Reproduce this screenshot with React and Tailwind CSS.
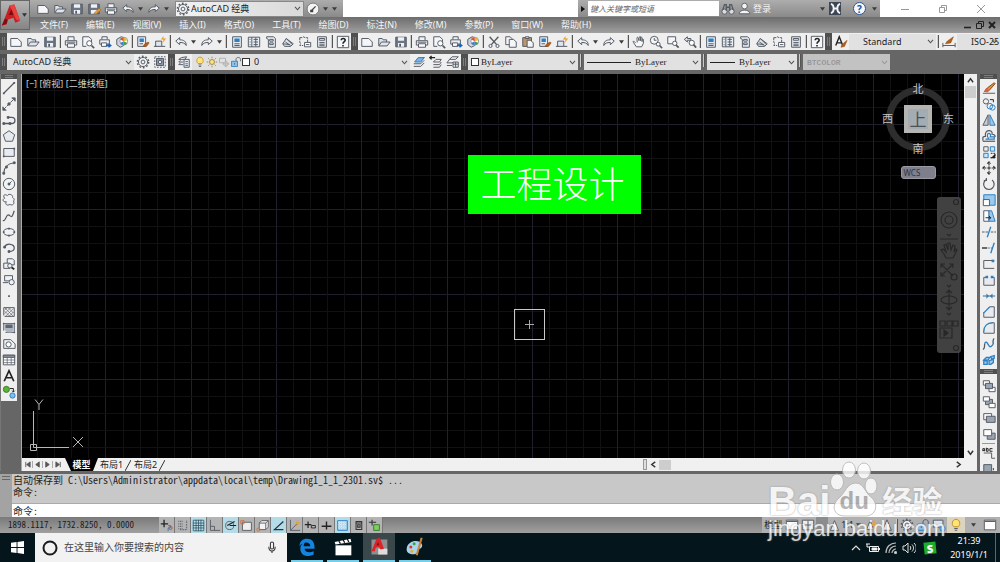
import { Fragment } from 'react';

const ink = '#545a63';
const blue = '#2d7fc1';
const soft = '#dfe5ec';

// All toolbar glyphs share a 16x16 box
const ICONS = {
    new: <path d="M2 13V4h8l4 4v5z" fill="#f4f6f9" />,
    open: <><path d="M2 12V4h4l1 1.500h4V8" fill={soft} /><path d="M2 12.500 5 8h10l-3.500 4.500z" fill={soft} /></>,
    save: <><path d="M2 2.500h12v11H2z" fill="#6b7684" /><path d="M4.500 2.500h7v4h-7zM4.500 9h7v4.500h-7z" fill="#eef1f5" stroke="none" /><path d="M6 10h2v3.500H6z" fill={ink} stroke="none" /></>,
    saveas: <><path d="M2 2.500h12v11H2z" fill="#6b7684" /><path d="M4.500 2.500h7v4h-7zM4.500 9h7v4.500h-7z" fill="#eef1f5" stroke="none" /><path d="m8 13 6-6 2 2-6 5z" fill="#e8a23c" stroke="#a86614" strokeWidth="0.800" /></>,
    print: <><path d="M4.500 6V2h7v4M1.500 6.500h13v5h-13z" fill="#eef1f5" /><path d="M4 10h8v4H4z" fill="#fff" /><path d="M3 8.200h10" /></>,
    preview: <><path d="M2 13V2h7l3 3v3" fill="#f4f6f9" /><path d="M2 13h4" /><circle cx="9.500" cy="9.500" r="3" fill="#fff" /><path d="m12 12 3 3" strokeWidth="2" /></>,
    publish: <><path d="M4.500 5V2h6v3M2 5.500h11v5H2z" fill="#eef1f5" /><path d="M4 9h6v4H4z" fill="#fff" /><path d="M9 12h5m-2-2 2.500 2-2.500 2" stroke="#1464c0" strokeWidth="1.800" /></>,
    sphere: <><path d="m2 5 5-3 3 1v9l-4 2-4-3z" fill="#cfd6df" /><circle cx="10" cy="7" r="4.500" fill="#fff" stroke="#89a" /><path d="M10 7V2.500A4.500 4.500 0 0 1 14 6z" fill="#e8b830" stroke="none" /><path d="M10 7 6 5a4.500 4.500 0 0 1 4-2.500z" fill="#e05030" stroke="none" /><path d="m10 7 4 2a4.500 4.500 0 0 1-4 2.500z" fill="#40a050" stroke="none" /><path d="m10 7-4 2a4.500 4.500 0 0 0 4 2.500z" fill="#3a80d0" stroke="none" /></>,
    match: <><path d="M2 2h9v11H2z" fill="#e7edf4" /><path d="M4 4h5v4H4z" fill={blue} stroke="none" /><path d="M4 10h4" /><path d="m8 13 2-3 4-2 1 1-3 4z" fill="#b4601a" stroke="#8a4510" strokeWidth="0.600" /></>,
    block: <><path d="M3 7h7v6H3z" fill={soft} /><path d="M1 13h3M10 13h4" /><path d="m12 1-3 4h3l-1 4 4-5h-3z" fill="#f0a020" stroke="none" /></>,
    undo: <path d="M2 7 6.500 3v2.500c5 0 7.500 2 7.500 6.500-1.500-2.500-3.500-3.500-7.500-3.500V11z" fill="#eef1f5" />,
    redo: <path d="M14 7 9.500 3v2.500C4.500 5.500 2 7.500 2 12c1.500-2.500 3.500-3.500 7.500-3.500V11z" fill="#eef1f5" />,
    props: <><path d="M3 2h10v12H3z" fill="#e7edf4" /><path d="M5 4h6v4H5z" fill={blue} stroke="none" /><path d="M5 10h6M5 12h6" /></>,
    center: <><path d="M1.500 2.500h13v11h-13z" fill="#e7edf4" /><path d="M5.500 2.500v11M7.500 5h5M7.500 8h5M7.500 11h5M3 5h1M3 8h1M3 11h1" /><path d="M10 3v10" /></>,
    palette: <><path d="M3 2h8l2 2v10H5V5L3 4z" fill="#e7edf4" /><path d="M6.500 5h4v2h-4zM6.500 9h4v2h-4z" /></>,
    sheets: <><path d="m2 10 4-6 8 6-3 3H4z" fill={soft} /><path d="m5 8 6 4M2 10l8 1M6 4l7 7" /></>,
    markup: <><path d="M2 3h3l1-1 2 1h3v5M2 3v5l1 2-1 2h4" strokeDasharray="3 1" /><path d="M7.500 8.500h7v5h-7z" fill="#fff" /><path d="M9 11h4" /></>,
    calc: <><path d="M3 2h10v12H3z" fill="#e7edf4" /><path d="M5 4h6v2H5zM5 8.500h6M5 10.500h6M5 12.200h6" /></>,
    help: <><path d="M1.500 1.500h13v13h-13z" fill="#f4f6f9" /><path d="M6 6c0-3 4.500-2.500 4.500 0C10.500 7.500 8 7.500 8 10M8 11.500v1.500" stroke="#222" strokeWidth="1.800" /></>,
    cut: <><path d="m3 2 8 9M13 2 5 11" strokeWidth="1.600" /><circle cx="4" cy="12.500" r="1.800" /><circle cx="12" cy="12.500" r="1.800" /></>,
    copy: <><path d="M2 11V2h5l2 2v7z" fill="#f4f6f9" /><path d="M6 14V5h5l3 3v6z" fill="#f4f6f9" /></>,
    paste: <><path d="M2 3h10v10H2z" fill="#b9976b" /><path d="M5 2h4v2H5z" fill={soft} /><path d="M7 14V6h4l3 3v5z" fill="#f4f6f9" /></>,
    pan: <path d="m4 9-2-2c-1 0-1 1 0 2l3 4.500h6l2-4V5c-1-1-1.500 0-1.500 2.500V3c-1-1-1.700 0-1.700 3.500V2C8.800 1 8 2 8 6.500L7 3C6 2 5.300 3 5.700 5L6 8.500" fill="#f7f7f7" />,
    zoomrt: <><circle cx="6" cy="6" r="4.500" fill="#f4f6f9" /><path d="M6 3.500V6h2.500" /><circle cx="10.500" cy="10.500" r="2.200" fill="#fff" /><path d="m12 12 3 3" strokeWidth="1.800" /></>,
    zoomwin: <><path d="M2 2h9v8H2z" fill="#f4f6f9" /><circle cx="10" cy="9.500" r="2.500" fill="#fff" /><path d="m11.500 11.500 3 3" strokeWidth="2" /></>,
    zoomprev: <><path d="M5 2 1.500 5 5 8V6h4V4H5z" fill={soft} /><circle cx="10" cy="9" r="3" fill="#fff" /><path d="m12 11 3 3.500" strokeWidth="2" /></>,
    textstyle: <><path d="m2 12 4-10 4 10M3.500 9h5" stroke="#222" strokeWidth="1.600" /><path d="m8 14 1-3 6-5-3 7z" fill="#b4601a" stroke="#8a4510" strokeWidth="0.600" /></>,
    dimstyle: <><path d="M1 9v5M15 9v5M1 12h14" /><path d="m4 10 2-3 7-5-3 7z" fill="#b4601a" stroke="#8a4510" strokeWidth="0.600" /></>,
    gear: <><circle cx="8" cy="8" r="5.200" fill="#f2f2f2" /><circle cx="8" cy="8" r="6.500" strokeDasharray="2 2.080" strokeWidth="1.600" /><circle cx="8" cy="8" r="2.200" /></>,
    gearbox: <><path d="M2 2h12v12H2z" strokeDasharray="2 1.500" /><path d="M4 4h8v8H4z" fill="#8d99a8" /><circle cx="8" cy="8" r="2" fill="#e7edf4" /></>,
    layers: <><path d="m5 3 6-1-2 3H2zM2 8l2-2M2 11l2-2M2 11h5M2 8h5" /><path d="M8 5h6v9H8z" fill="#e7edf4" /><path d="M9.500 7.500h3M9.500 10h3M9.500 12h3" stroke={blue} /></>,
    bulb: <><path d="M5.500 10C2 7 4 1.500 8 1.500S14 7 10.500 10z" fill="#ffe27a" stroke="#c09020" /><path d="M6 12h4M6.500 14h3" /></>,
    sun: <><circle cx="8" cy="8" r="3.300" fill="#ffe27a" stroke="#8d7a40" /><path d="M8 1v2M8 13v2M1 8h2M13 8h2M3 3l1.500 1.500M11.500 11.500 13 13M13 3l-1.500 1.500M3 13l1.500-1.500" stroke="#8d7a40" /></>,
    vpfreeze: <><path d="M2 3h8v6H2z" stroke="#aaa" /><circle cx="10.500" cy="10.500" r="3" fill="#e4e4e4" stroke="#aaa" /><path d="M10.500 6v9M6 10.500h9" stroke="#aaa" /></>,
    lock: <><path d="M2 7h8v7H2z" fill="#8fc0ea" stroke={blue} /><path d="M8 7V4.500C8 1 14 1 14 4.500V7" /><path d="M6 9.500v2" /></>,
    layermake: <><path d="m5 7 6-1 3-3-7 1zM2 10h8l4-4M2 13h8l4-4" /><path d="m3 8 4-5h7l-4 5z" fill="#7fb4e4" stroke={blue} /></>,
    layerprev: <><path d="M1 3h6M3 1 1 3l2 2" strokeWidth="1.600" stroke="#222" /><path d="m5 8 3-3h6l-2 3zM5 11h7l2-3M5 14h7l2-3" /></>,
    layerstate: <><path d="m4 5 3-3h7l-3 3zM1 9h6l1-1M1 12h6M4 5 1 9" /><path d="M8 8h6v6H8z" fill="#e7edf4" /><path d="M8 10.500h6M11 8v6" /></>,
    line: <><path d="M2 14 14 2" strokeWidth="1.400" /><path d="M1 13h2v2H1zM13 1h2v2h-2z" fill={ink} stroke="none" /></>,
    xline: <><path d="M1 15 15 1" strokeDasharray="5 1" /><path d="M1 11v4h4M15 5V1h-4" fill={ink} /><circle cx="8" cy="8" r="1.400" fill={ink} /></>,
    pline: <><path d="M2 12h9c5 0 5-7 0-7H8" strokeWidth="1.500" /><path d="M1 11h2v2H1zM6 4h2v2H6zM8 11h2v2H8z" fill={ink} /></>,
    polygon: <path d="m8 2 6.500 4.500L12 14H4L1.500 6.500z" fill="#e7eaee" />,
    rect: <><path d="M2 4h12v9H2z" fill="#e7eaee" /><path d="M1 12h2v2H1zM13 3h2v2h-2z" fill={ink} stroke="none" /></>,
    arc: <><path d="M2 14c0-6 4-11 12-12" strokeWidth="1.400" /><path d="M1 13h2v2H1zM13 1h2v2h-2zM4 6h2v2H4z" fill={ink} /></>,
    circle: <><circle cx="8" cy="8" r="6.500" fill="#f0f2f4" /><path d="m8 8 3-3M7 7h2v2H7z" fill={ink} /></>,
    cloud: <path d="M6 3c2-3 7-1 6 2 3 2 2 4 1 4 2 3-1 6-4 4-3 2-6 0-4-3-4 1-5-3-2-4C0 2 4 1 6 3z" fill="#f0f2f4" />,
    spline: <path d="M1 13c3 2 4-8 7-6s3 4 6-5" strokeWidth="1.400" />,
    ellipse: <><ellipse cx="8" cy="8" rx="6.500" ry="4" fill="#f0f2f4" /><path d="M7 3h2v2H7zM7 11h2v2H7zM1 7h2v2H1zM13 7h2v2h-2z" fill={ink} stroke="none" /></>,
    earc: <><path d="M3 7c2-5 11-4 11 1 0 3-3 4-6 4" strokeWidth="1.400" /><path d="M2 6h2v2H2zM7 11h2v2H7z" fill={ink} /></>,
    insert: <><path d="M6 2h6l2 2v5H6z" fill="#eef1f5" /><path d="M2 7h7v6H2z" fill="#eef1f5" /><circle cx="9" cy="10" r="2.500" fill="#eef1f5" /><path d="m11 12 3 2" strokeWidth="2" stroke="#222" /></>,
    makeblock: <><path d="M3 3h9v6H3z" fill="#eef1f5" /><path d="M1 11h6" /><circle cx="11" cy="10.500" r="3" fill="#eef1f5" /></>,
    point: <path d="M7 7h2v2H7z" fill={ink} stroke="none" />,
    hatch: <><path d="M2 3h12M2 3v9M14 3v10H3" /><path d="m3 6 3-3M3 10l7-7M4 13 13 4M8 13l5-5M3 3l10 10M7 3l6 6M3 7l6 6" strokeWidth="0.700" /></>,
    gradient: <><path d="M1 3h14M2 2v9M14 2v12M4 13h11" /><path d="M3 4h10v7l-2 2H6l-3-3z" fill="#aeb5bf" stroke="none" /><path d="M4 4h8v4H4z" fill="#5d6570" stroke="none" /></>,
    region: <><path d="M2 13V3h8l5 5v5z" fill="#f0f2f4" /><circle cx="7.500" cy="8.500" r="3" fill="#fff" /></>,
    table: <><path d="M1.500 2.500h13v11h-13z" fill="#fff" /><path d="M1.500 2.500h13V5h-13z" fill="#8b95a2" /><path d="M1.500 8h13M1.500 11h13M6 5v8M10.500 5v8" strokeWidth="0.800" /></>,
    mtext: <path d="M2.500 14 8 2l5.500 12M4.500 10h7" stroke="#222" strokeWidth="1.900" />,
    addsel: <><circle cx="5" cy="5" r="3.500" fill="#5cb03c" stroke="#3a8020" /><path d="M9 4h4v4M11.500 6.500 13 8l1.500-1.500" stroke="#222" /><circle cx="12" cy="12" r="3" fill="#7fc0f0" stroke={blue} /></>,
    erase: <><path d="M1 14h14" /><path d="m3 12 3-4 8-6 1 1-7 8z" fill="#e0903c" stroke="#8a4510" /><path d="m2 12 3-4 3 3-2 2z" fill="#d06050" stroke="none" /></>,
    copyobj: <><circle cx="4.500" cy="5" r="3" /><circle cx="9" cy="10.500" r="3.200" stroke={blue} /><circle cx="12" cy="12" r="3" stroke={blue} /><path d="M9 3h4v3" stroke="#222" /></>,
    mirror: <><path d="M7 2v12H1z" fill="#c5ccd5" /><path d="M9 2v12h6z" fill="#9ac8ee" stroke={blue} /></>,
    offset: <><path d="M1 13.500V10c0-1 1-1.500 3-1.500C2 0 13 0 11.500 6c3 0 3.500 1 3.500 3" strokeWidth="1.400" /><path d="M1 14h14" strokeWidth="1.400" /><path d="M4 11.500h4C5 8 6 5 8 5s2 3 1.500 4H14v2.500H9" stroke={blue} strokeWidth="1.400" /></>,
    array: <><path d="M2 2h5v5H2z" /><path d="M9.500 2h5v5h-5zM2 9.500h5v5H2z" stroke={blue} fill="#cfe4f6" /><path d="M10 9.500h5v5M9.500 14.500h5" stroke="#222" strokeDasharray="2 1" /><path d="M15 10v5h-5z" fill="#222" stroke="none" /></>,
    move: <path d="M8 1v14M1 8h14M6 3l2-2 2 2M6 13l2 2 2-2M3 6 1 8l2 2M13 6l2 2-2 2" stroke="#333" strokeWidth="1.300" strokeDasharray="4 1" />,
    rotate: <path d="M11.500 3.500A6 6 0 1 1 5 3M5 1v3H2" strokeWidth="1.400" />,
    scale: <><path d="M2 2h13v12H2z" fill="#9ac8ee" stroke={blue} /><path d="M1.500 7.500h7v7h-7z" fill="#fff" /></>,
    stretch: <><path d="M2 2h6v12H2z" fill="#fff" /><path d="M8 2h3l4 12H8z" fill="#9ac8ee" stroke={blue} /><path d="M4 10h6M8 8l2 2-2 2" stroke="#222" /></>,
    trim: <><path d="M6 14 10 2" stroke={blue} strokeWidth="1.500" /><path d="M0 8h7M10 8h6" strokeDasharray="3 1" /></>,
    extend: <><path d="m10 14 4-12" stroke={blue} strokeWidth="1.500" /><path d="M0 8h6" stroke="#222" strokeWidth="1.500" /><path d="M7 8h5" stroke={blue} strokeDasharray="2 1" /></>,
    brkpt: <><path d="M2 13V4h12M2 13h12" /><path d="M11 3h3v3h-3z" fill={blue} stroke="none" /></>,
    brk: <><path d="M5 5H2v9h12V5h-3" fill="#e7eaee" /><path d="M4 3h3v3H4zM10 3h3v3h-3z" fill={blue} stroke="none" /></>,
    join: <><path d="M1 8h14" /><path d="m5 5 3 3-3 3zM12 5 9 8l3 3z" fill={blue} stroke="none" /></>,
    chamfer: <><path d="M2 8v6h12V2H9" fill="#e7eaee" /><path d="m2 9 7-7" stroke={blue} strokeWidth="1.500" /></>,
    fillet: <><path d="M2 11v3h12V2h-3" fill="#e7eaee" /><path d="M2 12C2 6 6 2 12 2" stroke={blue} strokeWidth="1.500" /></>,
    blend: <><path d="M1 14c2 0 2-3 2-6M14 2c-1 0-2 3-1 6" strokeWidth="1.500" /><path d="M3 8c2-6 4 2 6 3s3-2 4-3" stroke={blue} strokeWidth="1.500" /></>,
    explode: <path d="m2 8 3-3h4L7 8zM2 9h4v4H2zM10 4l4-1v3l-3 1zM8 9l5-2v4l-3 2H8z" fill="#9ac8ee" stroke={blue} strokeWidth="1.400" />,
    front: <><path d="M1.500 2h7v5h-7zM8 9.500h7v5H8z" fill="#fff" /><path d="M4 5h8v6H4z" fill="#9aa5b2" /></>,
    back: <><path d="M4 5h8v6H4z" fill="#9aa5b2" /><path d="M1.500 2h7v5h-7zM8 9.500h7v5H8z" fill="#fff" /></>,
    above: <><path d="M2 3h9v7H2z" fill="#fff" /><path d="M5 6h10v7H5z" fill="#9aa5b2" /></>,
    below: <><path d="M6 7h9v7H6z" fill="#9aa5b2" /><path d="M2 3h9v7H2z" fill="#fff" /></>,
    annot: <><path d="M2 8h9v6h4" /><path d="M1 6V3h2v3M1 5h2M5 6V2M5 3h2v3H5M12 3H9v3h3" stroke="#222" /></>,
    hatchback: <><path d="M2 3h9v9H2z" fill="#9aa5b2" /><path d="M13 7v7" strokeDasharray="2 1" stroke="#222" /></>,
    infer: <><path d="M5 1v9M1 6h9" stroke="#222" strokeWidth="1.600" /><path d="M10 8h3v3h-3v4" stroke={blue} /><circle cx="13" cy="11" r="2" stroke="#c05030" /></>,
    snap: <path d="M3 3h6M3 6h6M3 9h6M3 12h6M13 2v11H4" strokeDasharray="1 1" strokeWidth="1.500" />,
    grid: <path d="M1.500 1.500h13v13h-13zM1 5h14M1 8h14M1 11h14M5 1v14M8 1v14M11 1v14" stroke="#2c4b5c" strokeWidth="0.900" />,
    ortho: <path d="M3 1v13h12M3 9h5v5" />,
    polar: <><circle cx="7" cy="8" r="5" /><path d="m4 8 9-5M7 8h8" stroke="#222" strokeWidth="1.500" /></>,
    osnap: <><path d="M3 4h11v10H3z" fill="#eee" /><path d="M1 2h4v4H1z" stroke="#e06a30" /></>,
    osnap3: <><path d="m4 5 3-3h8v8l-3 3H4z" fill="#f4f4f4" /><path d="M12 5v8M4 5h8l3-3" /><circle cx="3" cy="13" r="2" stroke="#e06a30" /></>,
    otrack: <path d="M14 3 3 13h11" stroke="#234" strokeWidth="1.500" />,
    ducs: <><path d="M3 1v13h12M3 14l8-8" /><path d="m12 1-3 5h2l-1 4 5-6h-3z" fill="#f0a020" stroke="none" /></>,
    dyn: <><path d="M5 3v8M1 7h8" stroke="#222" strokeWidth="1.500" /><path d="M9 8h5v3H9z" stroke="#222" /></>,
    lwt: <path d="M8 3v10M2 9h12" stroke="#222" strokeWidth="1.700" />,
    tpy: <><path d="M2 2h12v12H2z" fill="#a6d0ec" stroke={blue} /><path d="M3 4h10M3 7h10M3 10h10M4 3v10M7 3v10M10 3v10" stroke="#fff" strokeDasharray="1 1" /></>,
    qp: <path d="M5 3h7v10H5zM5 5h7M7 7h3v3H7z" stroke="#333" strokeWidth="1.300" />,
    sc: <><path d="M5 1v7M1 4h9" stroke="#333" strokeWidth="1.400" /><path d="M7 7h7v7H7z" fill="#7fcf60" stroke="#2f7a20" /></>,
    window: <><path d="M1.500 2.500h13v11h-13z" fill="#fff" /><path d="M2 4h12" /></>,
    panes: <><path d="M1.500 2.500h13v11h-13z" fill="#eee" /><path d="M8 3v10M2 8h12" /></>,
    scale2: <path d="m3 14 5-12 5 12H8z" fill="#f0f0f0" />,
    star: <><path d="m3 13 4-10 4 10z" fill="#eee" /><path d="m12 3-2 5h4l-4 6" stroke="#f0a020" strokeWidth="2" /></>,
    monitor: <><path d="M1.500 2.500h11v8h-11z" fill="#dce6f0" /><circle cx="12" cy="12" r="3" fill="#7fb8e8" stroke={blue} /></>,
    binoc: <><circle cx="4" cy="11" r="3" fill="#ddd" /><circle cx="12" cy="11" r="3" fill="#ddd" /><path d="M2 9 4 3h2v7M14 9l-2-6h-2v7M6 6h4" strokeWidth="1.500" /></>,
    user: <><circle cx="8" cy="5" r="3.500" fill="#f4f4f4" /><path d="M1.500 14.500c0-6 13-6 13 0z" fill="#f4f4f4" /></>,
    compass: <><circle cx="8" cy="8" r="6.800" fill="#f4f4f4" stroke="#777" /><path d="m6 10 5-5M5.500 9.500h2v1.500h-2z" stroke="#444" strokeWidth="1.500" /></>,
};

const cx = (...c) => c.filter(Boolean).join(' ');

function Icon({ name, className = 'size-[14px]' }) {
    return (
        <svg viewBox="0 0 16 16" className={cx('shrink-0', className)} fill="none" stroke={ink} strokeWidth="1.100" aria-hidden="true">
            {ICONS[name]}
        </svg>
    );
}

function Tool({ name, className = 'w-[17px]' }) {
    return (
        <button type="button" aria-label={name} className={cx('flex h-4 shrink-0 items-center justify-center', className)}>
            <Icon name={name} />
        </button>
    );
}

function Caret({ label = 'more', className }) {
    return (
        <button type="button" aria-label={label} className={cx('flex w-[9px] shrink-0 items-center justify-center', className)}>
            <svg viewBox="0 0 6 4" className="h-1 w-[5px]" aria-hidden="true"><path d="M0 0h6L3 4z" fill="#3c3c3c" /></svg>
        </button>
    );
}

const Sep = () => <span className="mx-px h-[13px] w-0.5 shrink-0 border-r border-[#555] bg-[#ccc]" />;

function Grip({ vertical }) {
    return vertical ? (
        <div className="flex h-[5px] shrink-0 flex-col justify-center gap-px bg-[#4f4f4f] px-1">
            <span className="h-px bg-[#7d7d7d]" /><span className="h-px bg-[#7d7d7d]" />
        </div>
    ) : (
        <div className="flex w-[7px] shrink-0 justify-center gap-px self-stretch bg-[#4f4f4f] py-1">
            <span className="w-px bg-[#7d7d7d]" /><span className="w-px bg-[#7d7d7d]" />
        </div>
    );
}

// '|' is a separator, 'v' the arrow of a split button
function Tools({ items, className }) {
    return items.split(' ').map((it, i) => {
        if (it === '|') return <Sep key={i} />;
        if (it === 'v') return <Caret key={i} />;
        return <Tool key={i} name={it} className={className} />;
    });
}

function Select({ label, value, className, selectClass = 'pl-1.5', disabled, children }) {
    return (
        <div className={cx('relative flex h-4 shrink-0 items-center', disabled ? 'bg-[#c2c2c2]' : 'bg-[#e1e1e1]', className)}>
            {children}
            <select aria-label={label} disabled={disabled} className={cx('h-full min-w-0 flex-1 appearance-none bg-transparent text-[#222] outline-none disabled:text-[#888]', selectClass)}>
                <option>{value}</option>
            </select>
            <svg viewBox="0 0 8 6" className="pointer-events-none absolute right-0.5 h-[5px] w-[7px]" fill="none" stroke={disabled ? '#999' : '#555'} strokeWidth="1.300"><path d="m1 1 3 3.500L7 1" /></svg>
        </div>
    );
}

const MENUS = ['文件(F)', '编辑(E)', '视图(V)', '插入(I)', '格式(O)', '工具(T)', '绘图(D)', '标注(N)', '修改(M)', '参数(P)', '窗口(W)', '帮助(H)'];
const STD = 'new open save | print preview publish sphere |';
const WINDOWS = 'props center palette sheets markup calc | help';
const DRAW = ['line', 'xline', 'pline', 'polygon', 'rect', 'arc', 'circle', 'cloud', 'spline', 'ellipse', 'earc', 'insert', 'makeblock', 'point', 'hatch', 'gradient', 'region', 'table', 'mtext', 'addsel'];
const MODIFY = ['erase', 'copyobj', 'mirror', 'offset', 'array', 'move', 'rotate', 'scale', 'stretch', 'trim', 'extend', 'brkpt', 'brk', 'join', 'chamfer', 'fillet', 'blend', 'explode'];
const STATUS = ['infer', 'snap', 'grid', 'ortho', 'polar', 'osnap', 'osnap3', 'otrack', 'ducs', 'dyn', 'lwt', 'tpy', 'qp', 'sc'];
const STATUS_ON = ['grid', 'polar', 'otrack', 'tpy'];

function Header() {
    return (
        <header className="flex shrink-0 bg-[#8b8b8b]">
            <button type="button" aria-label="AutoCAD" className="flex h-[30px] w-[30px] shrink-0 items-center border border-[#666] bg-linear-to-b from-[#b5b5b5] to-[#858585]">
                <svg viewBox="0 0 22 26" className="h-[26px] w-[21px]">
                    <path d="M1 24 9 3l5-1 6 17-5 2-2-5-6 2-1 5z" fill="#c81e24" />
                    <path d="m9 3 5-1 6 17-4-1z" fill="#e8433f" />
                    <path d="m8 13 3-6 2 6z" fill="#7c0d12" />
                    <path d="m1 24 5-2 1-4-3-1z" fill="#7c0d12" />
                </svg>
                <svg viewBox="0 0 6 4" className="h-1 w-[5px]"><path d="M0 0h6L3 4z" fill="#333" /></svg>
            </button>
            <div className="flex min-w-0 flex-1 flex-col">
                <div className="flex h-[17px] bg-white">
                    <div className="flex items-center bg-linear-to-b from-[#adadad] to-[#8a8a8a] pl-1">
                        <Tools items="new open save saveas print undo v redo v" />
                        <Select label="工作空间" value="AutoCAD 经典" className="ml-1 w-[129px] border border-[#888] bg-linear-to-r from-[#f2f2f2] to-[#d9d9d9] text-[9px]" selectClass="pl-px">
                            <Icon name="gear" />
                        </Select>
                        <Tool name="compass" />
                        <Caret />
                        <Caret className="mr-1" />
                    </div>
                    <div className="flex-1" />
                    <div className="flex w-[302px] items-center bg-linear-to-b from-[#adadad] to-[#8a8a8a]">
                        <svg viewBox="0 0 4 6" className="mx-[3px] h-1.5 w-1 shrink-0"><path d="m0 0 4 3-4 3z" fill="#111" /></svg>
                        <input aria-label="搜索" placeholder="键入关键字或短语" className="h-[15px] w-[131px] bg-white px-0.5 text-[8px] italic outline-none placeholder:text-[#666]" />
                        <Tool name="binoc" />
                        <button type="button" className="flex items-center text-[9px] text-[#f4f4f4]"><Icon name="user" className="mr-0.5 ml-0.5 size-[13px]" />登录</button>
                        <Caret className="ml-auto" />
                        <button type="button" aria-label="Exchange" className="ml-0.5 flex h-[13px] w-3 items-center justify-center bg-[#3c4654]">
                            <svg viewBox="0 0 12 12" className="size-[11px]" stroke="#f5f5f5" strokeWidth="2" fill="none"><path d="M1 1c4 1 4 9 0 10M11 1C7 2 7 10 11 11M3 6h6" /></svg>
                        </button>
                        <button type="button" aria-label="帮助" className="mr-1 ml-3 flex size-[13px] items-center justify-center rounded-full border border-[#2b5a9c] bg-[#f4f8ff] text-[10px] leading-none font-bold text-[#1c4fa0]">?</button>
                        <Caret className="mr-px" />
                    </div>
                    <div className="flex w-[120px] items-center justify-around pl-1.5">
                        <button type="button" aria-label="最小化"><svg viewBox="0 0 8 8" className="size-2" stroke="#999"><path d="M0 4.500h8" /></svg></button>
                        <button type="button" aria-label="还原"><svg viewBox="0 0 8 8" className="size-2" stroke="#999" fill="none"><path d="M.5 2.500h5v5h-5zM2.500 2V.5h5v5H6" /></svg></button>
                        <button type="button" aria-label="关闭"><svg viewBox="0 0 8 8" className="size-2" stroke="#999"><path d="m0 0 8 8M8 0 0 8" /></svg></button>
                    </div>
                </div>
                <nav className="flex h-4 items-center gap-[18px] bg-linear-to-b from-[#6d6d6d] to-[#a0a0a0] pl-2.5 text-[9px] text-[#f5f5f5]">
                    {MENUS.map((m) => <button key={m} type="button" className="shrink-0">{m}</button>)}
                    <div className="ml-auto flex gap-1 pr-1">
                        <button type="button" aria-label="最小化图形"><svg viewBox="0 0 8 8" className="size-2" stroke="#222" strokeWidth="1.600"><path d="M0 6.500h7" /></svg></button>
                        <button type="button" aria-label="还原图形"><svg viewBox="0 0 8 8" className="size-2" stroke="#222" fill="none"><path d="M.5 2.500h5v5h-5zM2.500 2V.5h5v5H6" /></svg></button>
                        <button type="button" aria-label="关闭图形"><svg viewBox="0 0 8 8" className="size-2" stroke="#222" strokeWidth="2"><path d="m1 1 6 6M7 1 1 7" /></svg></button>
                    </div>
                </nav>
            </div>
        </header>
    );
}

function Toolbars() {
    return (
        <div className="flex shrink-0 flex-col gap-1 overflow-hidden pb-1 text-[9px]">
            <div className="flex h-[17px] items-center bg-[#efefef]">
                <Grip />
                <Tools items={`${STD} match block | undo v redo v | ${WINDOWS}`} />
                <Grip />
                <Tools items={`${STD} cut copy paste match block | undo v redo v | pan zoomrt zoomwin zoomprev | ${WINDOWS}`} />
                <Grip />
                <Tool name="textstyle" />
                <Select label="文字样式" value="Standard" className="w-[87px]" selectClass="pl-3.5" />
                <Sep />
                <Tool name="dimstyle" />
                <Select label="标注样式" value="ISO-25" className="flex-1" selectClass="pl-3.5" />
            </div>
            <div className="flex h-4 items-center">
                <Grip />
                <Select label="工作空间" value="AutoCAD 经典" className="w-[127px]" />
                <div className="flex bg-[#efefef]"><Tools items="gear gearbox" /></div>
                <Grip />
                <div className="flex bg-[#efefef]"><Tool name="layers" /></div>
                <Select label="图层" value="0" className="w-[218px] pl-0.5" selectClass="pl-1">
                    {['bulb', 'sun', 'vpfreeze', 'lock'].map((n) => <Icon key={n} name={n} className="size-3" />)}
                    <span className="size-2 border border-[#333] bg-white" />
                </Select>
                <div className="flex bg-[#efefef]"><Tools items="layermake layerprev layerstate" /></div>
                <Grip />
                <div className="flex gap-px font-['Liberation_Serif',serif] text-[9px]">
                    <Select label="颜色" value="ByLayer" className="w-[110px] pl-[3px]" selectClass="pt-px pl-0.5"><span className="size-2 border border-[#333] bg-white" /></Select>
                    <Sep />
                    <Select label="线型" value="ByLayer" className="w-[117px] pl-[3px]" selectClass="pt-px pl-1"><span className="h-px w-[44px] bg-[#222]" /></Select>
                    <Sep />
                    <Select label="线宽" value="ByLayer" className="w-[90px] pl-[3px]" selectClass="pt-px pl-1"><span className="h-px w-[25px] bg-[#222]" /></Select>
                    <Sep />
                    <Select label="打印样式" value="BTCOLOR" disabled className="w-[87px] font-['Liberation_Mono',monospace] text-[8px]" selectClass="pt-px pl-1" />
                </div>
            </div>
        </div>
    );
}

function Grid() {
    const steps = Array.from({ length: 120 }, (_, i) => i);
    return (
        <svg className="absolute inset-0 h-full w-full" aria-hidden="true">
            {steps.map((i) => {
                const x = Math.round(15.2 + i * 17.06);
                const y = Math.round(-1 + i * 17.02);
                return (
                    <Fragment key={i}>
                        <rect x={x} y="0" width="1" height="100%" fill={i % 5 === 4 ? '#20202c' : '#111114'} />
                        <rect x="0" y={y} width="100%" height="1" fill={i % 5 === 3 ? '#20202c' : '#111114'} />
                    </Fragment>
                );
            })}
        </svg>
    );
}

function ViewCube() {
    return (
        <div className="absolute top-[7px] right-2.5 flex w-[72px] flex-col items-center text-[11px] text-[#c4c4c4]">
            <div className="relative flex size-[76px] items-center justify-center">
                <span className="absolute size-[64px] rounded-full border-[7px] border-[#2d2d2d]" />
                <span className="absolute top-0 leading-4">北</span>
                <span className="absolute bottom-0 leading-4">南</span>
                <span className="absolute left-0.5 leading-4">西</span>
                <span className="absolute right-0.5 leading-4">东</span>
                <button type="button" className="relative flex size-7 items-center justify-center border-4 border-[#b4b4b0] bg-[#a3acb2] text-[17px] leading-none text-[#4a5258]">上</button>
            </div>
            <button type="button" className="mt-[9px] flex h-[13px] w-[35px] items-center rounded-[3px] border border-[#9a9aa4] bg-[#7f7f8c] pl-0.5 text-[8px] text-[#33333a]">WCS</button>
        </div>
    );
}

function NavBar() {
    return (
        <div className="absolute top-[123px] right-[3px] h-[156px] w-6 rounded-[3px] bg-[#414141]">
            <svg viewBox="0 0 24 156" className="h-full w-full" fill="none" stroke="#282828" strokeWidth="1.200">
                <circle cx="19" cy="5" r="2.500" /><circle cx="12" cy="23" r="8" /><circle cx="12" cy="23" r="4" />
                <path d="m10 37 2 2 2-2M3 42h18" />
                <path d="m7 57-3-4 2-1 3 3-2-7 2-1 2 6v-7h2l1 7 2-5 2 1-1 6 2-3 1 1-4 8H9z" />
                <path d="m4 67 12 12M16 67 4 79M4 71v-4h4M12 67h4v4M4 75v4h4" /><circle cx="17" cy="80" r="3" />
                <path d="m10 88 2 2 2-2" />
                <path d="M12 93v20M9 96l3-3 3 3M9 110l3 3 3-3" /><ellipse cx="12" cy="103" rx="8" ry="4" />
                <path d="m10 116 2 2 2-2M3 124h5v5H3zM10 124h5v5h-5zM16 124h5v5h-5zM3 131h12v10H3z" /><path d="m7 133 4 3-4 3z" fill="#282828" />
                <circle cx="19" cy="151" r="2.500" />
            </svg>
        </div>
    );
}

function Canvas() {
    return (
        <section className="relative min-h-0 min-w-0 flex-1 overflow-hidden bg-black">
            <Grid />
            <p className="absolute top-1 left-1 text-[9px] leading-3 text-[#d0d0d0]">[−] [俯视] [二维线框]</p>
            <div className="absolute top-[81px] left-[446px] flex h-[59px] w-[173px] items-center justify-center bg-[#00ff00] pr-1 text-[36px] font-light text-white">工程设计</div>
            <div className="absolute top-[235px] left-[492px] flex size-[31px] items-center justify-center border border-[#c8c8c8]">
                <svg viewBox="0 0 9 9" className="size-[9px]" stroke="#aaa"><path d="M4.500 0v9M0 4.500h9" /></svg>
            </div>
            <svg viewBox="0 0 64 56" className="absolute bottom-[3px] left-2 h-14 w-16" fill="none" stroke="#b8b8b8" strokeWidth="1">
                <path d="M.5 45.500h6v6h-6zM3.500 12v36.500H39M5 .5l4 5 4-5M9 5.500v5.500M43 38l10 10M53 38 43 48" />
            </svg>
            <ViewCube />
            <NavBar />
        </section>
    );
}

function Chevron({ d, label }) {
    return (
        <button type="button" aria-label={label} className="flex size-3 shrink-0 items-center justify-center">
            <svg viewBox="0 0 8 8" className="size-[7px]" fill="none" stroke="#333" strokeWidth="1.600"><path d={d} /></svg>
        </button>
    );
}

function Workspace() {
    return (
        <main className="flex min-h-0 flex-1 bg-[#666]">
            <aside className="flex w-[17px] shrink-0 flex-col border-l border-[#777]">
                <Grip vertical />
                <div className="flex flex-col bg-[#efefef] py-px">{DRAW.map((n) => <Tool key={n} name={n} className="w-4" />)}</div>
            </aside>
            <div className="ml-1 flex min-w-0 flex-1 flex-col border-l border-[#aaa]">
                <div className="flex min-h-0 flex-1">
                    <Canvas />
                    <div className="flex w-[13px] flex-col items-center justify-between bg-[#f0f0f0]">
                        <div className="flex flex-col items-center">
                            <Chevron label="up" d="m1 6 3-4 3 4" />
                            <span className="h-3 w-[11px] bg-[#cdcdcd]" />
                        </div>
                        <Chevron label="down" d="m1 2 3 4 3-4" />
                    </div>
                </div>
                <div className="flex h-[13px] items-center bg-[#f0f0f0] text-[9px] text-[#222]">
                    <div className="flex items-center divide-x divide-[#aaa] pl-px">
                        {['M2 1v6M7 1 3 4l4 3z', 'M6 1 2 4l4 3z', 'm2 1 4 3-4 3z', 'm1 1 4 3-4 3zM6 1v6'].map((d) => (
                            <button key={d} type="button" aria-label="切换布局" className="flex w-2.5 justify-center"><svg viewBox="0 0 8 8" className="size-[7px]" fill="#555" stroke="#555"><path d={d} /></svg></button>
                        ))}
                    </div>
                    <button type="button" className="relative ml-0.5 flex h-full w-[33px] items-center justify-center font-bold text-white">
                        <svg viewBox="0 0 33 13" className="absolute inset-0 h-full w-full"><path d="M0 0h33l-5 13H6z" fill="#000" /></svg>
                        <span className="relative">模型</span>
                    </button>
                    {['布局1', '布局2'].map((t) => (
                        <button key={t} type="button" className="flex h-full w-[34px] items-center">
                            <span className="w-[27px] shrink-0 text-center">{t}</span>
                            <svg viewBox="0 0 6 12" className="h-3 w-1.5" stroke="#333"><path d="M0 12 6 1" /></svg>
                        </button>
                    ))}
                    <div className="flex-1" />
                    <div className="flex w-[334px] items-center">
                        <span className="h-[11px] w-1 border border-[#999] bg-[#ddd]" />
                        <Chevron label="left" d="M6 1 2 4l4 3" />
                        <span className="h-2.5 w-3 bg-[#cdcdcd]" />
                        <span className="flex-1" />
                        <Chevron label="right" d="m2 1 4 3-4 3" />
                        <span className="w-[13px]" />
                    </div>
                </div>
            </div>
            <aside className="ml-[3px] flex w-[17px] shrink-0 flex-col overflow-hidden">
                <Grip vertical />
                <div className="flex shrink-0 flex-col bg-[#efefef] py-px">{MODIFY.map((n) => <Tool key={n} name={n} />)}</div>
                <Grip vertical />
                <div className="flex shrink-0 flex-col bg-[#efefef] pt-1">
                    {['front', 'back', 'above', 'below'].map((n) => <Tool key={n} name={n} />)}
                    <span className="mx-0.5 my-px h-px bg-[#999]" />
                    <Tool name="annot" />
                    <Tool name="hatchback" />
                </div>
            </aside>
            <div className="w-[3px]" />
        </main>
    );
}

function CommandLine() {
    return (
        <section className="mt-[3px] flex shrink-0 font-['Noto_Sans_Mono_CJK_SC','Liberation_Mono',monospace] text-[10px] leading-3 text-[#222]">
            <div className="w-3 bg-[#a3a3a3] px-0.5 pt-0.5"><div className="h-1 border-y border-[#666]" /></div>
            <div className="min-w-0 flex-1 bg-[#c8c8c8]">
                <div className="h-[30px] border-b border-[#aaa] pl-px">
                    <p>自动保存到 C:\Users\Administrator\appdata\local\temp\Drawing1_1_1_2301.sv$ ...</p>
                    <p>命令:</p>
                </div>
                <label className="flex h-[13px] items-center bg-white pl-px">命令:<input aria-label="命令" className="min-w-0 flex-1 outline-none" /></label>
            </div>
        </section>
    );
}

function StatusBar() {
    return (
        <section className="flex h-4 shrink-0 items-stretch bg-linear-to-b from-[#7a7a7a] to-[#a0a0a0] text-[9px] text-[#1c1c1c]">
            <span className="w-[159px] self-center pl-2 font-['Noto_Sans_Mono_CJK_SC','Liberation_Mono',monospace]">1898.1117, 1732.8250, 0.0000</span>
            {STATUS.map((n) => (
                <button key={n} type="button" aria-label={n} className={cx('flex w-4 items-center justify-center border-r border-[#777]', STATUS_ON.includes(n) ? 'bg-[#b5dbe6]' : 'bg-[#b4b4b4]')}><Icon name={n} className="size-[13px]" /></button>
            ))}
            <div className="ml-auto flex items-center bg-[#b0b0b0]">
                <button type="button" className="w-[22px]">模型</button>
                <Tools items="window panes" className="w-4" />
                <span className="w-3 self-stretch bg-[#8c8c8c]" />
                <button type="button" className="flex items-center"><Icon name="scale2" className="size-[13px]" />1:1</button>
                <Caret />
                <Tools items="star scale2 | gear lock monitor" className="w-4" />
                <button type="button" aria-label="隔离对象" className="flex w-[18px] items-center justify-center self-stretch bg-[#dcd5bd]"><Icon name="bulb" /></button>
                <Caret className="mx-1" />
                <Tool name="window" className="mr-0.5 w-4" />
            </div>
        </section>
    );
}

const APPS = [
    { name: 'Edge', icon: <path d="M3 11C3 5 7 2 12 2c6 0 9 4 9 10v2H9c1 5 7 5 11 3v4c-8 4-16 1-16-7 0-4 3-7 6-8-1 1-2 3-2 5h8c0-6-9-6-13 0z" fill="#1583e0" /> },
    { name: '电影和电视', icon: <><path d="M3 10h19v12H3z" fill="#fff" /><path d="m2 6 19-4 1 4L3 9z" fill="#fff" /><path d="m7 5 2 3M12 3l2 4M17 2l2 4" stroke="#111" strokeWidth="1.500" /></> },
    { name: 'AutoCAD', active: true, icon: <><path d="M3 3h19v18H3z" fill="#8f8f8f" /><path d="M11 14h11v7H11z" fill="#ddd" /><path d="M3 17 9 2l4-1 5 13-4 1-2-3-4 1-1 4z" fill="#dc2229" /><path d="m9 10 2-4 1 4z" fill="#7a0d12" /></> },
    { name: '画图', icon: <><path d="M2 14C3 6 12 3 18 6c4 3 3 7 0 8-3 0-3 1-3 4-2 5-14 3-13-4z" fill="#a8d4ee" /><circle cx="7" cy="12" r="1.800" fill="#d33" /><circle cx="11" cy="8" r="1.800" fill="#3a3" /><circle cx="8" cy="17" r="1.800" fill="#e8b020" /><path d="M20 1 14 22" stroke="#c98238" strokeWidth="2.500" /></> },
];

function Taskbar() {
    return (
        <footer className="flex h-[29px] shrink-0 bg-[#04161b] text-white">
            <button type="button" aria-label="开始" className="flex w-[35px] items-center justify-center">
                <svg viewBox="0 0 14 14" className="size-[13px]" fill="#fff"><path d="m0 2 6-1v5.500H0zM7 1l7-1v6.500H7zM0 7.500h6V13l-6-1zM7 7.500h7V14l-7-1z" /></svg>
            </button>
            <label className="flex w-[252px] items-center bg-[#f2f2f2] px-[7px]">
                <svg viewBox="0 0 16 16" className="size-4 shrink-0"><circle cx="8" cy="8" r="6.500" fill="none" stroke="#1c1c1c" strokeWidth="2" /></svg>
                <input aria-label="搜索" placeholder="在这里输入你要搜索的内容" className="min-w-0 flex-1 px-1.5 text-[10px] outline-none placeholder:text-[#444]" />
                <svg viewBox="0 0 10 16" className="mr-1 h-[13px] w-2" fill="none" stroke="#333" strokeWidth="1.300"><rect x="3" y="1" width="4" height="9" rx="2" /><path d="M1 7c0 7 8 7 8 0M5 12v3" /></svg>
            </label>
            <div className="flex gap-1 pl-1">
                {APPS.map((a) => (
                    <button key={a.name} type="button" aria-label={a.name} className={cx('flex w-8 flex-col items-center justify-between border-b-2 border-[#74d0ea] pt-1', a.active && 'bg-[#3a474b]')}>
                        <svg viewBox="0 0 24 24" className="size-5">{a.icon}</svg>
                    </button>
                ))}
            </div>
            <div className="ml-auto flex items-center gap-[5px]">
                <svg viewBox="0 0 10 6" className="h-1.5 w-2.5" fill="none" stroke="#ddd" strokeWidth="1.200"><path d="m1 5 4-4 4 4" /></svg>
                <svg viewBox="0 0 14 10" className="h-2.5 w-3.5" stroke="#eee" fill="none"><path d="M3.500 3.500h9v5h-9zM13.500 5v2M1 1v3h2M0 1h4" /><path d="M6 5h5v2H6z" fill="#fff" /></svg>
                <svg viewBox="0 0 12 12" className="size-3" fill="none" stroke="#bbb" strokeWidth="1.200"><path d="M1 11C1 5 5 1 11 1M4 11c0-4 3-7 7-7M7 11c0-2 2-4 4-4" /><circle cx="10.500" cy="10.500" r="1" fill="#fff" /></svg>
                <svg viewBox="0 0 14 12" className="h-3 w-3.5" fill="none" stroke="#ddd"><path d="M1 4h2l3-3v10L3 8H1zM8 4c1 1 1 3 0 4M10 2.500c2 2 2 5 0 7M12 1c3 3 3 7 0 10" /></svg>
                <span className="ml-[3px] flex size-3 -rotate-6 items-center justify-center bg-[#1fae2b] text-[11px] leading-none font-black">S</span>
                <time className="ml-2 w-10 text-center text-[9px] leading-[14px]">21:39<br />2019/1/1</time>
                <span className="mr-1 h-full w-0.5 border-r border-[#5b676b]" />
            </div>
        </footer>
    );
}

function Watermark() {
    return (
        <div className="pointer-events-none absolute right-[54px] bottom-[21px] flex w-[178px] flex-col opacity-80 [text-shadow:0_0_2px_#888]" aria-hidden="true">
            <div className="flex h-[60px] items-end font-bold text-white">
                <span className="font-['Liberation_Sans',sans-serif] text-[40px] leading-8">Bai</span>
                <span className="relative flex h-14 w-[48px] items-end justify-center">
                    <svg viewBox="0 0 48 56" className="absolute inset-0 h-full w-full" fill="#fff" stroke="#b5b5b5">
                        <ellipse cx="7" cy="21" rx="6.500" ry="8" /><ellipse cx="19" cy="9" rx="6.500" ry="8" /><ellipse cx="34" cy="10" rx="6.500" ry="8" /><ellipse cx="41" cy="25" rx="6" ry="8" />
                        <path d="M26 22c8 0 9 10 15 14 9 8 4 19-5 19H15C3 55 1 44 9 37c6-5 8-15 17-15z" />
                    </svg>
                    <span className="relative pb-1 font-['Liberation_Sans',sans-serif] text-[24px] leading-6 text-[#a5a5a5] [text-shadow:none]">du</span>
                </span>
                <span className="pl-1 text-[30px] leading-8">经验</span>
            </div>
            <span className="font-['Liberation_Sans',sans-serif] text-[22px] leading-6 text-white">jingyan.baidu.com</span>
        </div>
    );
}

export default function App() {
    return (
        <div className="relative flex h-screen w-full flex-col overflow-hidden bg-[#666] font-['Noto_Sans','Noto_Sans_CJK_SC',sans-serif]">
            <Header />
            <Toolbars />
            <Workspace />
            <CommandLine />
            <StatusBar />
            <Taskbar />
            <Watermark />
        </div>
    );
}
